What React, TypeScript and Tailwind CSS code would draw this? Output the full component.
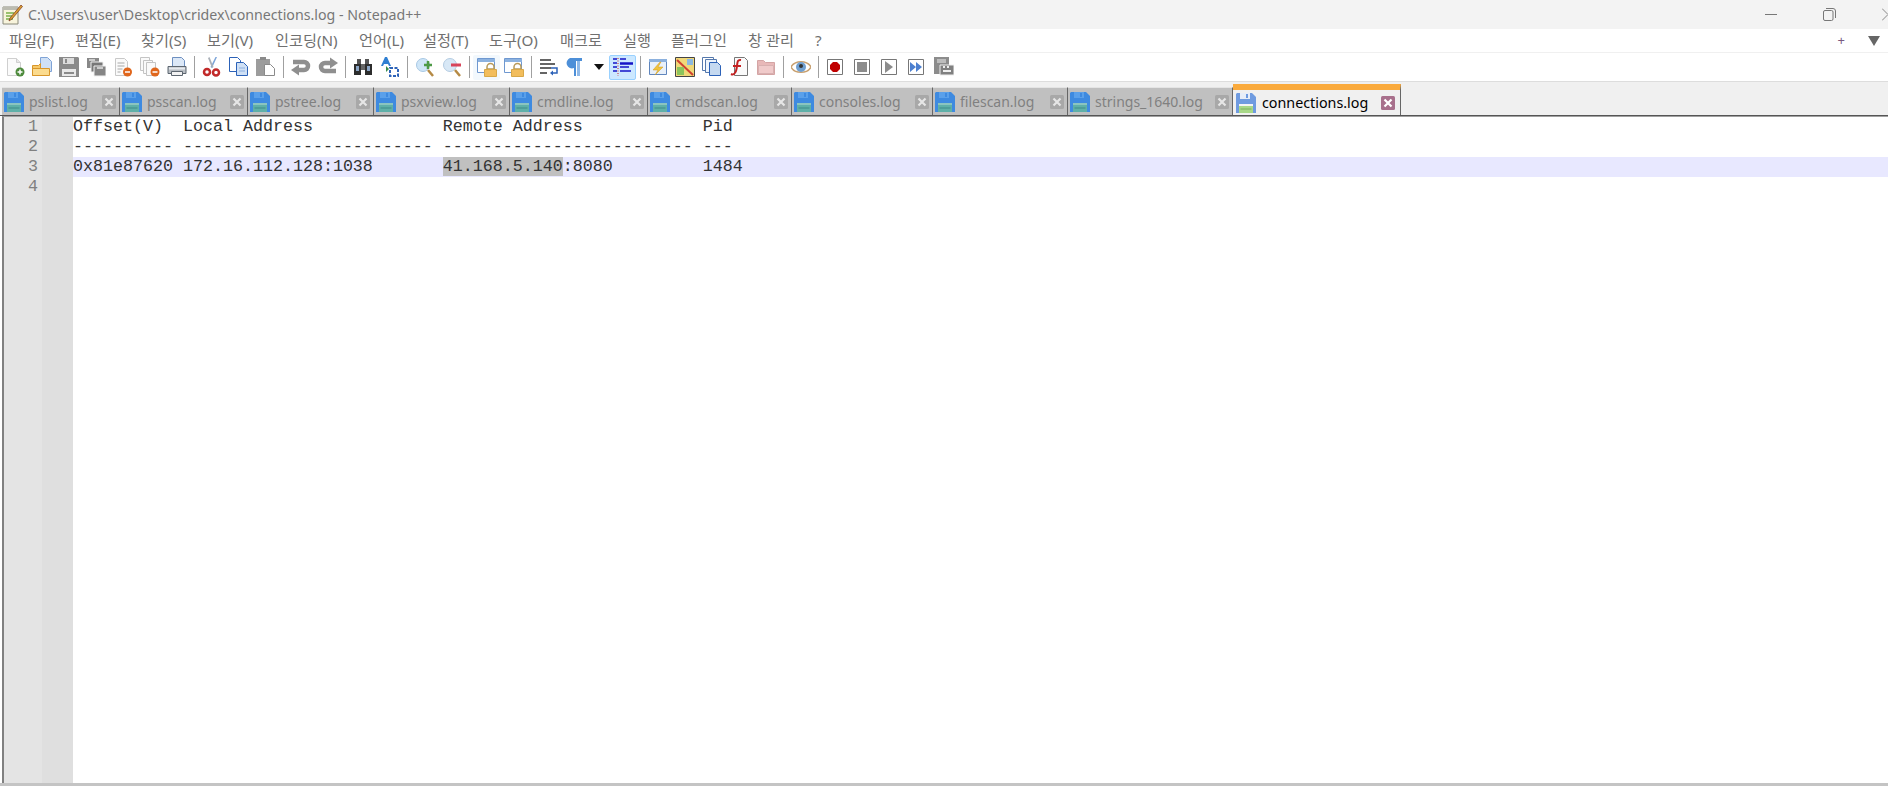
import React from 'react';

const MENUS: [string, string][] = [
  ['파일(F)', 'w-[66px]'],
  ['편집(E)', 'w-[66px]'],
  ['찾기(S)', 'w-[66px]'],
  ['보기(V)', 'w-[68px]'],
  ['인코딩(N)', 'w-[84px]'],
  ['언어(L)', 'w-[64px]'],
  ['설정(T)', 'w-[66px]'],
  ['도구(O)', 'w-[71px]'],
  ['매크로', 'w-[63px]'],
  ['실행', 'w-[48px]'],
  ['플러그인', 'w-[77px]'],
  ['창 관리', 'w-[67px]'],
  ['?', 'w-[20px]'],
];

const TABS: [string, string][] = [
  ['pslist.log', 'w-[118px]'],
  ['psscan.log', 'w-[128px]'],
  ['pstree.log', 'w-[126px]'],
  ['psxview.log', 'w-[136px]'],
  ['cmdline.log', 'w-[138px]'],
  ['cmdscan.log', 'w-[144px]'],
  ['consoles.log', 'w-[141px]'],
  ['filescan.log', 'w-[135px]'],
  ['strings_1640.log', 'w-[165px]'],
];

const LINES = [
  'Offset(V)  Local Address             Remote Address            Pid',
  '---------- ------------------------- ------------------------- ---',
];

const Svg = ({ children, w = 20 }: { children: React.ReactNode; w?: number }) => (
  <svg width={w} height={20} viewBox={`0 0 ${w} 20`} className="block">
    {children}
  </svg>
);

const NewIcon = () => (
  <Svg>
    <path d="M2.500 1.500h9l4 4v13h-13z" fill="#fbfbfb" stroke="#cfcfcf" />
    <path d="M11.500 1.500v4h4" fill="#e8e8e8" stroke="#cfcfcf" />
    <circle cx="15" cy="15" r="4.500" fill="#4d8a3c" />
    <path d="M15 12.500v5M12.500 15h5" stroke="#fff" strokeWidth="1.500" />
  </Svg>
);
const OpenIcon = () => (
  <Svg>
    <path d="M8.500 .500h7l4 4v10h-11z" fill="#cfe0f5" stroke="#7fa3d6" />
    <path d="M.500 8.500h6l2-2v12h-8z" fill="#f6c96a" stroke="#d8962a" />
    <path d="M.500 11.500h17v7H.500z" fill="#fbdb8e" stroke="#d8962a" />
  </Svg>
);
const SaveIcon = () => (
  <Svg>
    <path d="M0 0h19l1 1v19H0z" fill="#8a8a8a" />
    <path d="M4 1h11v6H4z" fill="#dcdcdc" />
    <path d="M6 2h2v4H6z" fill="#8a8a8a" />
    <path d="M3 12h14v7H3z" fill="#e8e8e8" />
    <path d="M5 15h10v2H5z" fill="#8a8a8a" />
  </Svg>
);
const SaveAllIcon = () => (
  <Svg>
    <path d="M1 1h12v10H1z" fill="#888" />
    <path d="M5 5h12v10H5z" fill="#777" stroke="#f0f0f0" />
    <path d="M8 9h12v10H8z" fill="#858585" stroke="#f0f0f0" />
    <path d="M11 10h6v2h-6zM3 2h6v2H3z" fill="#ccc" />
  </Svg>
);
const CloseIcon = () => (
  <Svg>
    <path d="M2.500 1.500h9l3 3v14h-12z" fill="#fafafa" stroke="#c8c8c8" />
    <path d="M4.500 6h7M4.500 9h7M4.500 12h5M4.500 15h3" stroke="#a8a8a8" />
    <circle cx="14.500" cy="15" r="4.500" fill="#e0661c" />
    <path d="M12 15h5" stroke="#fff" strokeWidth="1.500" />
  </Svg>
);
const CloseAllIcon = () => (
  <Svg>
    <path d="M.500 .500h9v13h-9z" fill="#fafafa" stroke="#c4c4c4" />
    <path d="M3.500 3.500h9v13h-9z" fill="#fafafa" stroke="#c4c4c4" />
    <path d="M6.500 5.500h9v13h-9z" fill="#fafafa" stroke="#c4c4c4" />
    <circle cx="15" cy="15" r="4.500" fill="#e0661c" />
    <path d="M12.500 15h5" stroke="#fff" strokeWidth="1.500" />
  </Svg>
);
const PrintIcon = () => (
  <Svg>
    <path d="M5.500 .500h9l3 3v7h-12z" fill="#dce8f7" stroke="#6d8fc0" />
    <path d="M1 9.500h18v7H1z" fill="#b9bec4" stroke="#5d6670" />
    <path d="M2 10.500h16v2H2z" fill="#e7eaee" />
    <path d="M4.500 14.500h11v4h-11z" fill="#f3f3f3" stroke="#5d6670" />
  </Svg>
);
const CutIcon = () => (
  <Svg>
    <path d="M15 0l-5 11-1.500-1L13.500 0z" fill="#7ba4d9" />
    <path d="M6 1l4 10 1.500-1L7.500 0z" fill="#aab0b8" />
    <circle cx="5" cy="15" r="3" fill="none" stroke="#c22a2a" strokeWidth="2.500" />
    <circle cx="14" cy="15.500" r="3" fill="none" stroke="#c22a2a" strokeWidth="2.500" />
  </Svg>
);
const CopyIcon = () => (
  <Svg>
    <path d="M.500 .500h8l3 3v11h-11z" fill="#fff" stroke="#2c62b8" />
    <path d="M7.500 5.500h7l4 4v9h-11z" fill="#cfe0f5" stroke="#2c62b8" />
    <path d="M10 11h6M10 14h6" stroke="#8db0e0" />
  </Svg>
);
const PasteIcon = () => (
  <Svg>
    <path d="M0 2h14v17H0z" fill="#9c9c9c" />
    <path d="M4 0h6v3H4z" fill="#8a8a8a" />
    <path d="M8.500 7.500h6l4 4v7h-10z" fill="#fff" stroke="#8a8a8a" />
  </Svg>
);
const UndoIcon = () => (
  <Svg>
    <path d="M2 5h11a4 4 0 0 1 0 8H8" fill="none" stroke="#8f8f8f" strokeWidth="4.500" />
    <path d="M0 13l8-5.500v11z" fill="#8f8f8f" />
  </Svg>
);
const RedoIcon = () => (
  <Svg>
    <path d="M18 14H7a4 4 0 0 1 0-8h5" fill="none" stroke="#8f8f8f" strokeWidth="4.500" />
    <path d="M20 6l-8-5.500v11z" fill="#8f8f8f" />
  </Svg>
);
const FindIcon = () => (
  <Svg>
    <path d="M4 2h4v5H4zM12 2h4v5h-4z" fill="#555" />
    <path d="M1 7h7v11H1zM12 7h7v11h-7z" fill="#2d2d2d" />
    <path d="M8 7h4v6H8z" fill="#666" />
    <path d="M3 9h3v5H3zM14 9h3v5h-3z" fill="#8aa4c4" />
  </Svg>
);
const ReplaceIcon = () => (
  <Svg>
    <path d="M1 9L5 0h2l4 9H9L8 7H4L3 9z" fill="#2f7fd2" />
    <path d="M6 9l3 3-3 3z" fill="#3a8d4a" />
    <path d="M10 11h8v8h-8z" fill="none" stroke="#2c62b8" strokeWidth="2" strokeDasharray="3 1.500" />
  </Svg>
);
const ZoomInIcon = () => (
  <Svg>
    <circle cx="8" cy="8" r="6.500" fill="#cfe6f8" stroke="#a8c8e4" />
    <path d="M13 13l5 6" stroke="#b58a45" strokeWidth="2.500" />
    <path d="M13 4v8M9 8h8" stroke="#4d9a46" strokeWidth="2.500" />
  </Svg>
);
const ZoomOutIcon = () => (
  <Svg>
    <circle cx="8" cy="8" r="6.500" fill="#d8e8f6" stroke="#b4cce2" />
    <path d="M13 13l5 6" stroke="#b58a45" strokeWidth="2.500" />
    <path d="M9 8h10" stroke="#d8455a" strokeWidth="3" />
  </Svg>
);
const LockIcon = () => (
  <Svg>
    <path d="M.500 1.500h17v14H.500z" fill="#fff" stroke="#6f98d0" />
    <path d="M1 2h17v3H1z" fill="#8cb2e0" />
    <path d="M10 10a3.500 3.500 0 0 1 7 0v2h-7z" fill="none" stroke="#b89a5a" strokeWidth="1.500" />
    <path d="M7.500 12.500h12v7h-12z" fill="#f2bd5c" stroke="#d8a848" />
  </Svg>
);
const WrapIcon = () => (
  <Svg>
    <path d="M1 3h11M1 7h15M1 11h11M1 16h7" stroke="#333" strokeWidth="1.500" />
    <path d="M12 11h6v5h-6" fill="none" stroke="#2c62b8" strokeWidth="1.500" />
    <path d="M14 13.500l-3 2.500 3 2.500z" fill="#2c62b8" />
  </Svg>
);
const PilcrowIcon = () => (
  <Svg>
    <path d="M4 1h12v3h-2v15h-3V4H10v15H8v-8a5 5 0 0 1-4-10z" fill="#4d8fd8" />
    <path d="M11 4h3v15h-3z" fill="#8fb9e8" />
  </Svg>
);
const IndentIcon = () => (
  <Svg>
    <path d="M5 1v18" stroke="#d02020" strokeWidth="1" strokeDasharray="1 1.500" />
    <path d="M0 2h4M0 6h4M0 10h4M0 14h4" stroke="#1414c8" strokeWidth="1.500" />
    <path d="M7 2h6M7 6h13M7 7h13M7 10h9M7 14h11" stroke="#1414c8" strokeWidth="1.500" />
  </Svg>
);
const MonitorIcon = () => (
  <Svg>
    <path d="M1.500 2.500h17v15h-17z" fill="#e8f0fa" stroke="#5f85bd" />
    <path d="M1 2h18v3H1z" fill="#8cb1de" />
    <path d="M12 5L5 13h5l-3 5 8-8h-5l3-5z" fill="#f0c33c" stroke="#d19a20" strokeWidth=".5" />
  </Svg>
);
const MapIcon = () => (
  <Svg>
    <path d="M.500 .500h19v19H.500z" fill="#f0d878" stroke="#444" />
    <path d="M2 3l16 15" stroke="#d04030" strokeWidth="2" />
    <path d="M2 10h7v8H2z" fill="#8cc45c" />
    <path d="M12 2h6v6h-6z" fill="#8cb8e0" />
  </Svg>
);
const DocsIcon = () => (
  <Svg>
    <path d="M.500 .500h11v13H.500z" fill="#fff" stroke="#5578ac" />
    <path d="M3.500 2.500h11v13H3.500z" fill="#eef4fb" stroke="#5578ac" />
    <path d="M7.500 5.500h8l3 3v10h-11z" fill="#c5d9f0" stroke="#2c62b8" />
  </Svg>
);
const FuncIcon = () => (
  <Svg>
    <path d="M5.500 .500h10l3 3v15h-13z" fill="#fafafa" stroke="#777" />
    <path d="M12 3C7 2 9 8 7 14c-1 3-3 4-5 3M4 9h8" fill="none" stroke="#c42020" strokeWidth="2" />
  </Svg>
);
const FolderIcon = () => (
  <Svg>
    <path d="M1.500 3.500h6l2 2h9v12h-17z" fill="#e8b8b8" stroke="#d4a4a4" />
    <path d="M2.500 8.500h15v8h-15z" fill="#f0caca" stroke="#d8b0b0" />
  </Svg>
);
const EyeIcon = () => (
  <Svg>
    <path d="M0 10C4 3 16 3 20 10 16 17 4 17 0 10z" fill="#fff" stroke="#c8a070" strokeWidth="1.500" />
    <circle cx="10" cy="10" r="5" fill="#6f9fd0" />
    <circle cx="10" cy="9" r="2" fill="#333" />
  </Svg>
);
const Frame = ({ children }: { children: React.ReactNode }) => (
  <Svg>
    <path d="M1.500 2.500h15v15h-15z" fill="#fff" stroke="#777" />
    {children}
  </Svg>
);
const RecordIcon = () => (
  <Frame>
    <path d="M7 5h4l3 3v4l-3 3H7l-3-3V8z" fill="#c00000" />
  </Frame>
);
const StopIcon = () => (
  <Frame>
    <path d="M4 5h10v10H4z" fill="#8c8c8c" />
  </Frame>
);
const PlayIcon = () => (
  <Frame>
    <path d="M5 4l8 6-8 6z" fill="#8c8c8c" />
  </Frame>
);
const FastIcon = () => (
  <Frame>
    <path d="M3 5l6 5-6 5zM9 5l6 5-6 5z" fill="#4d80d0" />
  </Frame>
);
const SaveMacroIcon = () => (
  <Svg>
    <path d="M0 0h15v17H0z" fill="#8c8c8c" />
    <path d="M3 3h9M3 5h9" stroke="#eee" />
    <path d="M6 8h14v10H6z" fill="#808080" stroke="#eee" />
    <path d="M9 9h2v2H9zM13 9h2v2h-2zM9 13h8v2H9z" fill="#eee" />
  </Svg>
);

const Tool = ({ children, variant }: { children: React.ReactNode; variant?: 'on' | 'hover' }) => {
  let cls = 'w-[27px] h-[25px] flex items-center justify-center border border-transparent';
  if (variant === 'on') cls = 'w-[27px] h-[25px] flex items-center justify-center bg-[#cce8ff] border border-[#99d1ff] rounded-[2px]';
  if (variant === 'hover') cls = 'w-[27px] h-[25px] flex items-center justify-center bg-[#f2f8fd] rounded-[2px]';
  return <div className={cls}>{children}</div>;
};

const Sep = () => (
  <div className="w-[8px] flex justify-center">
    <div className="w-px h-[22px] bg-[#a0a0a0]" />
  </div>
);

const Floppy = ({ active }: { active?: boolean }) => (
  <svg width="20" height="20" viewBox="0 0 20 20" className="block shrink-0">
    <path d="M1 0h15l4 4v16H0V1z" fill={active ? '#6f9be0' : '#3e8ae0'} />
    <path d="M4 0h10v6H4z" fill={active ? '#e8eef8' : '#5aa0ea'} />
    <path d="M10 1h2v4h-2z" fill={active ? '#6f9be0' : '#3e8ae0'} />
    <path d="M3 11h14v9H3z" fill={active ? '#a8d888' : '#5fb0a8'} />
    <path d="M3 11h14v2H3z" fill={active ? '#f4f4f4' : '#8ac4c0'} />
    <path d="M4.500 16h11" stroke={active ? '#7cb060' : '#3e8a88'} />
  </svg>
);

const TabClose = ({ active }: { active?: boolean }) => (
  <svg width="14" height="14" viewBox="0 0 14 14" className="block shrink-0">
    <rect width="14" height="14" rx="1.500" fill={active ? '#a8708c' : '#a8a8a8'} />
    <path d="M3.500 3.500l7 7M10.500 3.500l-7 7" stroke={active ? '#ffffff' : '#e6e6e6'} strokeWidth="2.200" />
  </svg>
);

const App: React.FC = () => {
  return (
    <div className="w-[1888px] h-[786px] overflow-hidden flex flex-col bg-white font-['Noto_Sans','Noto_Sans_CJK_KR',sans-serif]">
      {/* Title bar */}
      <div className="h-[29px] bg-[#f3f3f3] flex items-center shrink-0">
        <svg width="21" height="21" viewBox="0 0 21 21" className="block ml-[2px]">
          <path d="M1 3h15v17H1z" fill="#f8f4dc" stroke="#8a8a7a" />
          <path d="M1 3h15v3H1z" fill="#bbbbb0" />
          <path d="M4 9h8M4 12h6M4 15h7" stroke="#79b04a" strokeWidth="1.500" />
          <path d="M19 1l1.500 1.500L10 15l-3 2 1-3z" fill="#d8a030" stroke="#7a3020" strokeWidth=".7" />
        </svg>
        <span className="ml-[5px] text-[14.200px] text-[#777777] whitespace-pre">C:\Users\user\Desktop\cridex\connections.log - Notepad++</span>
        <div className="ml-auto flex items-center">
          <div className="w-[12px] h-px bg-[#777777] mr-[46px]" />
          <svg width="13" height="13" viewBox="0 0 13 13" className="block mr-[46px]">
            <rect x=".5" y="2.500" width="9.500" height="10" rx="1.500" fill="none" stroke="#777" />
            <path d="M3 .500h7a2.500 2.500 0 0 1 2.500 2.500v7" fill="none" stroke="#777" />
          </svg>
          <svg width="6" height="13" viewBox="0 0 6 13" className="block">
            <path d="M0 .500l6 6M0 12.500l6-6" stroke="#888" strokeWidth="1" fill="none" />
          </svg>
        </div>
      </div>

      {/* Menu bar */}
      <div className="h-[23px] bg-white flex items-center pl-[9px] shrink-0 text-[15.200px] text-[#707070]">
        {MENUS.map(([label, w]) => (
          <span key={label} className={`${w} whitespace-pre`}>{label}</span>
        ))}
        <div className="ml-auto flex items-center pr-[8px]">
          <span className="text-[#7a5a80] text-[13px] mr-[23px]">+</span>
          <div className="w-0 h-0 border-l-[6px] border-r-[6px] border-t-[10px] border-l-transparent border-r-transparent border-t-[#666666]" />
        </div>
      </div>
      <div className="h-px bg-[#f0f0f0] shrink-0" />

      {/* Toolbar */}
      <div className="h-[29px] bg-white border-b border-[#dddddd] flex items-center pl-[1px] shrink-0">
        <Tool><NewIcon /></Tool>
        <Tool><OpenIcon /></Tool>
        <Tool><SaveIcon /></Tool>
        <Tool><SaveAllIcon /></Tool>
        <Tool><CloseIcon /></Tool>
        <Tool><CloseAllIcon /></Tool>
        <Tool><PrintIcon /></Tool>
        <Sep />
        <Tool><CutIcon /></Tool>
        <Tool><CopyIcon /></Tool>
        <Tool><PasteIcon /></Tool>
        <Sep />
        <Tool><UndoIcon /></Tool>
        <Tool><RedoIcon /></Tool>
        <Sep />
        <Tool><FindIcon /></Tool>
        <Tool><ReplaceIcon /></Tool>
        <Sep />
        <Tool><ZoomInIcon /></Tool>
        <Tool><ZoomOutIcon /></Tool>
        <Sep />
        <Tool variant="hover"><LockIcon /></Tool>
        <Tool><LockIcon /></Tool>
        <Sep />
        <Tool><WrapIcon /></Tool>
        <Tool><PilcrowIcon /></Tool>
        <div className="w-[20px] flex justify-center">
          <div className="w-0 h-0 border-l-[5px] border-r-[5px] border-t-[6px] border-l-transparent border-r-transparent border-t-[#111111]" />
        </div>
        <Tool variant="on"><IndentIcon /></Tool>
        <Sep />
        <Tool><MonitorIcon /></Tool>
        <Tool><MapIcon /></Tool>
        <Tool><DocsIcon /></Tool>
        <Tool><FuncIcon /></Tool>
        <Tool><FolderIcon /></Tool>
        <Sep />
        <Tool><EyeIcon /></Tool>
        <Sep />
        <Tool><RecordIcon /></Tool>
        <Tool><StopIcon /></Tool>
        <Tool><PlayIcon /></Tool>
        <Tool><FastIcon /></Tool>
        <Tool><SaveMacroIcon /></Tool>
      </div>

      {/* Tabs */}
      <div className="h-[33px] bg-[#f0f0f0] flex items-end pl-[2px] shrink-0 text-[14px]">
        {TABS.map(([name, w]) => (
          <div
            key={name}
            className={`${w} h-[28px] bg-[#c0c0c0] border-t border-t-[#e4e4e4] border-r border-r-[#666666] flex items-center pl-[2px] pr-[3px] text-[#808080]`}
          >
            <Floppy />
            <span className="ml-[5px] whitespace-pre">{name}</span>
            <span className="ml-auto"><TabClose /></span>
          </div>
        ))}
        <div className="w-[168px] h-[31px] bg-[#f0f0f0] border-t-[6px] border-t-[#faaa3c] border-r border-r-[#666666] flex items-center pl-[3px] pr-[5px] text-black text-[14.300px]">
          <Floppy active />
          <span className="ml-[6px] whitespace-pre">connections.log</span>
          <span className="ml-auto"><TabClose active /></span>
        </div>
      </div>

      {/* Editor */}
      <div className="flex-1 min-h-0 flex flex-col border-t border-t-[#555555] border-b-[3px] border-b-[#c4c4c4] pl-[2px] bg-white">
        <div className="flex-1 min-h-0 flex border-t border-t-[#a0a0a0] border-l-2 border-l-[#808080]">
          <div className="w-[38px] bg-[#e4e4e4] shrink-0 pr-[4px] text-right text-[#808080] font-['Liberation_Mono',monospace] text-[16.670px] leading-[20px]">
            <div>1</div>
            <div>2</div>
            <div>3</div>
            <div>4</div>
          </div>
          <div className="w-[31px] bg-[#dfdfdf] shrink-0" />
          <div className="flex-1 min-w-0 font-['Liberation_Mono',monospace] text-[16.670px] leading-[20px] text-[#333333] whitespace-pre">
            <div>{LINES[0]}</div>
            <div>{LINES[1]}</div>
            <div className="bg-[#e8e8ff]">
              {'0x81e87620 172.16.112.128:1038       '}
              <span className="bg-[#c0c0c0]">41.168.5.140</span>
              {':8080         1484'}
            </div>
            <div>&nbsp;</div>
          </div>
        </div>
      </div>
    </div>
  );
};

export default App;
